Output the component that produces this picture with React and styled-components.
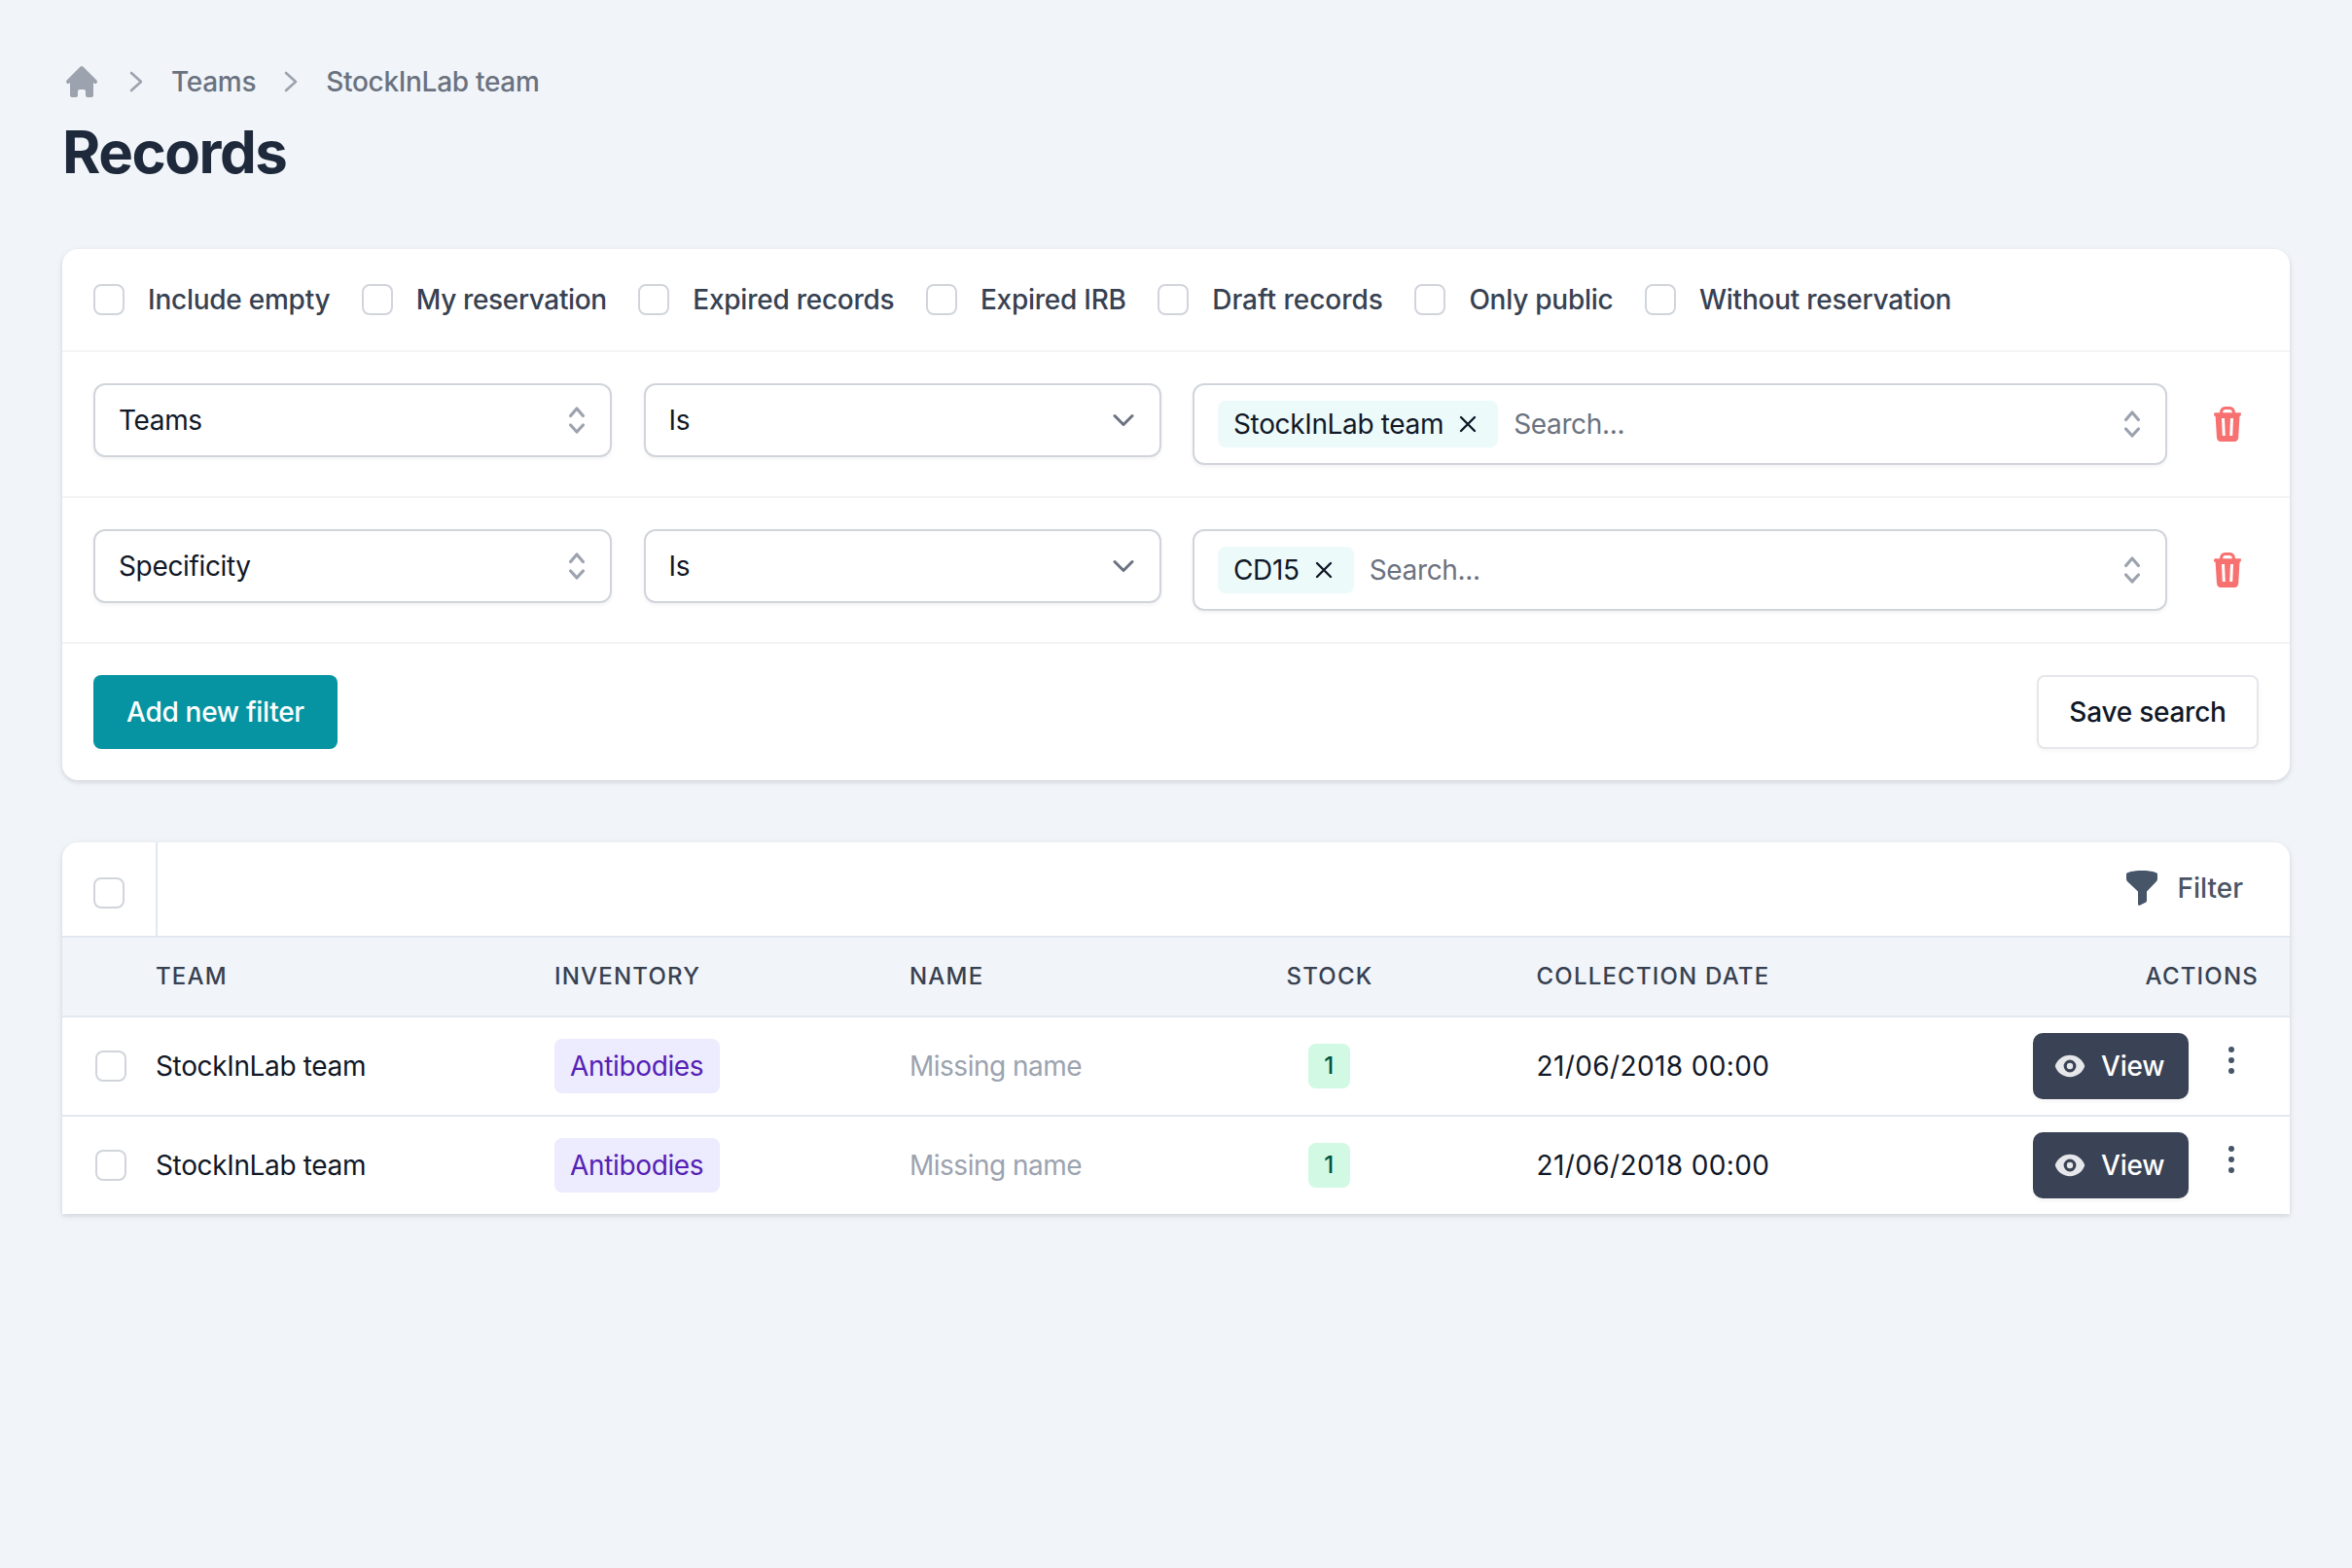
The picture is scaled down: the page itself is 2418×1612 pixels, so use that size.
import React from "react";
import styled, { createGlobalStyle } from "styled-components";

const Global = createGlobalStyle`
  * { box-sizing: border-box; }
  html, body { margin: 0; padding: 0; background: #f1f5f9; }
  body { font-family: Inter, "Noto Sans", sans-serif; font-size: 28px; line-height: 40px; letter-spacing: -0.35px; color: #111827; min-height: 1612px; }
`;

const Page = styled.main`
  padding: 64px 64px 0;
`;
const Breadcrumb = styled.nav`
  display: flex;
  align-items: center;
  height: 40px;
  gap: 16px;
  color: #6b7280;
  font-weight: 500;
  letter-spacing: -0.3px;
`;
const Title = styled.h1`
  margin: 16px 0 64px;
  font-size: 60px;
  line-height: 72px;
  font-weight: 700;
  letter-spacing: -1.5px;
  color: #1e293b;
`;
const Card = styled.section`
  background: #fff;
  border-radius: ${(p) => (p.$flat ? "16px 16px 0 0" : "16px")};
  box-shadow: 0 2px 6px rgba(15, 23, 42, 0.1), 0 2px 4px rgba(15, 23, 42, 0.05);
  margin-bottom: ${(p) => p.$gap || 0}px;
`;
const OptionRow = styled.div`
  display: flex;
  align-items: center;
  gap: 32.5px;
  padding: 32px;
  border-bottom: 2px solid #f3f4f6;
`;
const Option = styled.label`
  display: flex;
  align-items: center;
  gap: 24px;
  color: #374151;
  font-weight: 500;
  letter-spacing: ${(p) => p.$spacing};
`;
const Box = styled.span`
  display: block;
  flex: none;
  width: 32px;
  height: 32px;
  background: #fff;
  border: 2px solid #d1d5db;
  border-radius: 8px;
`;
const FilterRow = styled.div`
  display: grid;
  grid-template-columns: 533px 532px 1002px 1fr;
  column-gap: 32.5px;
  align-items: start;
  padding: 32px;
  border-bottom: 2px solid #f3f4f6;
`;
const Select = styled.div`
  display: flex;
  align-items: center;
  justify-content: space-between;
  height: 76px;
  padding: 0 26px 0 24px;
  background: #fff;
  border: 2px solid #d1d5db;
  border-radius: 12px;
  box-shadow: 0 2px 4px rgba(0, 0, 0, 0.05);
`;
const Multi = styled.div`
  display: flex;
  align-items: center;
  height: 84px;
  padding: 0 26px 0 24px;
  gap: 16px;
  background: #fff;
  border: 2px solid #d1d5db;
  border-radius: 12px;
  box-shadow: 0 2px 4px rgba(0, 0, 0, 0.05);
`;
const Tag = styled.span`
  display: flex;
  align-items: center;
  gap: 16px;
  height: 48px;
  padding: 0 22px 0 16px;
  background: #edfafa;
  border-radius: 8px;
  color: #111827;
`;
const Placeholder = styled.span`
  flex: 1;
  color: #6b7280;
`;
const TrashCell = styled.div`
  display: flex;
  justify-content: flex-end;
  padding: 24px 18px 0 0;
`;
const Footer = styled.div`
  display: flex;
  justify-content: space-between;
  padding: 32px;
`;
const Primary = styled.button`
  height: 76px;
  width: 251px;
  padding: 0;
  border: 0;
  border-radius: 8px;
  background: #0694a2;
  color: #fff;
  font: 500 28px/40px Inter, sans-serif;
  letter-spacing: -0.3px;
`;
const Secondary = styled.button`
  height: 76px;
  width: 228px;
  padding: 0;
  background: #fff;
  border: 2px solid #e5e7eb;
  border-radius: 8px;
  color: #111827;
  font: 500 28px/40px Inter, sans-serif;
  letter-spacing: -0.25px;
  box-shadow: 0 2px 4px rgba(0, 0, 0, 0.04);
`;
const TopBar = styled.div`
  display: flex;
  height: 98px;
  border-bottom: 2px solid #e2e8f0;
`;
const SelectAll = styled.div`
  width: 98px;
  padding: 36px 0 0 32px;
  border-right: 2px solid #e2e8f0;
`;
const FilterToggle = styled.div`
  margin-left: auto;
  display: flex;
  align-items: center;
  gap: 20px;
  padding: 0 48px 2px 0;
  color: #4b5563;
  font-weight: 500;
  letter-spacing: 0;
`;
const Row = styled.div`
  display: grid;
  grid-template-columns: 96px 410px 365px 387.5px 86px 615.5px 330px;
  align-items: center;
  height: ${(p) => (p.$head ? 82 : p.$last ? 100 : 102)}px;
  background: ${(p) => (p.$head ? "#f1f5f9" : "transparent")};
  border-bottom: ${(p) => (p.$last ? "0" : "2px solid #e2e8f0")};
`;
const HeadCell = styled.div`
  font-size: 24px;
  line-height: 32px;
  font-weight: 450;
  letter-spacing: 0.05em;
  text-transform: uppercase;
  color: #374151;
  white-space: nowrap;
  padding-left: ${(p) => p.$pl || 0}px;
  padding-right: ${(p) => p.$pr || 0}px;
  text-align: ${(p) => p.$align || "left"};
`;
const Cell = styled.div`
  display: flex;
  align-items: center;
  color: ${(p) => p.$color || "#111827"};
  padding-left: ${(p) => p.$pl || 0}px;
  justify-content: ${(p) => p.$justify || "flex-start"};
  letter-spacing: ${(p) => p.$spacing || "inherit"};
`;
const Inventory = styled.span`
  display: inline-flex;
  align-items: center;
  height: 56px;
  padding: 0 17px 0 16px;
  background: #edebfe;
  color: #5521b5;
  border-radius: 8px;
`;
const Stock = styled.span`
  display: inline-flex;
  align-items: center;
  justify-content: center;
  width: 43px;
  height: 46px;
  background: #d1f9e4;
  color: #03543f;
  border-radius: 8px;
  font-size: 24px;
  font-weight: 500;
`;
const Actions = styled.div`
  display: flex;
  align-items: center;
  justify-content: flex-end;
  gap: 41px;
  padding-right: 57px;
`;
const ViewButton = styled.button`
  display: flex;
  align-items: center;
  gap: 16px;
  width: 160px;
  height: 68px;
  padding: 0 0 0 22px;
  border: 0;
  border-radius: 10px;
  background: #3a4255;
  color: #fff;
  font: 500 28px/40px Inter, sans-serif;
  letter-spacing: -0.2px;
  box-shadow: 0 2px 4px rgba(0, 0, 0, 0.06);
`;
const Dots = styled.svg`
  display: block;
  margin-top: -12px;
`;

const Home = () => (
  <svg width="40" height="40" viewBox="0 0 20 20" fill="#9ca3af">
    <path d="M10.707 2.293a1 1 0 00-1.414 0l-7 7a1 1 0 001.414 1.414L4 10.414V17a1 1 0 001 1h2a1 1 0 001-1v-2a1 1 0 011-1h2a1 1 0 011 1v2a1 1 0 001 1h2a1 1 0 001-1v-6.586l.293.293a1 1 0 001.414-1.414l-7-7z" />
  </svg>
);
const ChevronRight = () => (
  <svg width="40" height="40" viewBox="0 0 40 40" fill="none" stroke="#9ca3af" strokeWidth="2.6" strokeLinecap="round" strokeLinejoin="round">
    <path d="M15 11l10 9-10 9" />
  </svg>
);
const UpDown = () => (
  <svg width="16" height="28" viewBox="0 0 16 28" fill="none" stroke="#9ca3af" strokeWidth="3.2" strokeLinecap="round" strokeLinejoin="round">
    <path d="M1.600 9.500L8 2l6.400 7.500M1.600 19L8 26l6.400-7" />
  </svg>
);
const ChevronDown = () => (
  <svg width="22" height="14" viewBox="0 0 22 14" fill="none" stroke="#6b7280" strokeWidth="3" strokeLinecap="round" strokeLinejoin="round">
    <path d="M2 2.500l9 9 9-9" />
  </svg>
);
const Close = () => (
  <svg width="18" height="18" viewBox="0 0 18 18" fill="none" stroke="#111827" strokeWidth="2.4" strokeLinecap="round">
    <path d="M2 2l14 14M16 2L2 16" />
  </svg>
);
const Trash = () => (
  <svg width="28" height="36" viewBox="0 0 28 36" fill="#f87171">
    <path fillRule="evenodd" d="M6 6.200C6 2.800 8.400 0 11.500 0h5C19.600 0 22 2.800 22 6.200h4.800c.7 0 1.200.6 1.200 1.200S27.500 9.800 26.800 9.800h-.3l-1.300 22.200c-.1 2.300-1.800 4-4 4H7c-2.200 0-3.900-1.700-4-4L1.600 9.800h-.4C.5 9.800 0 9.100 0 8.400s.5-2.200 1.200-2.200H6zm3.100 0h9.800C18.900 4.400 17.800 3 16.200 3h-4.400C10.200 3 9.100 4.400 9.100 6.200zM8 12l.8 18h3l-.8-18H8zm9 0l-.8 18h3l.8-18h-3z" />
  </svg>
);
const Funnel = () => (
  <svg width="32" height="36" viewBox="0 0 32 36" fill="#475569">
    <path d="M0 3.500C0 1.800 7 0 16 0s16 1.800 16 3.500v5c0 1-.4 2-1.100 2.700L21 21.500V31c0 .8-.5 1.400-1.200 1.800l-6 3c-.9.4-1.800-.2-1.800-1.200V21.500L1.100 11.200C.4 10.500 0 9.500 0 8.500v-5z" />
  </svg>
);
const Eye = () => (
  <svg width="32" height="32" viewBox="0 0 20 20" fill="#e5e7eb">
    <path d="M10 12a2 2 0 100-4 2 2 0 000 4z" />
    <path fillRule="evenodd" d="M.458 10C1.732 5.943 5.522 3 10 3s8.268 2.943 9.542 7c-1.274 4.057-5.064 7-9.542 7S1.732 14.057.458 10zM14 10a4 4 0 11-8 0 4 4 0 018 0z" />
  </svg>
);

const options = [
  { label: "Include empty", spacing: "-0.25px" },
  { label: "My reservation", spacing: "-0.36px" },
  { label: "Expired records", spacing: "-0.25px" },
  { label: "Expired IRB", spacing: "-0.25px" },
  { label: "Draft records", spacing: "-0.02px" },
  { label: "Only public", spacing: "-0.25px" },
  { label: "Without reservation", spacing: "-0.25px" },
];
const filters = [
  { field: "Teams", tag: "StockInLab team" },
  { field: "Specificity", tag: "CD15" },
];

export default function App() {
  return (
    <Page>
      <Global />
      <Breadcrumb>
        <Home />
        <ChevronRight />
        <span>Teams</span>
        <ChevronRight />
        <span>StockInLab team</span>
      </Breadcrumb>
      <Title>Records</Title>

      <Card $gap={64}>
        <OptionRow>
          {options.map((o) => (
            <Option key={o.label} $spacing={o.spacing}>
              <Box />
              {o.label}
            </Option>
          ))}
        </OptionRow>
        {filters.map((f) => (
          <FilterRow key={f.field}>
            <Select>
              {f.field}
              <UpDown />
            </Select>
            <Select>
              Is
              <ChevronDown />
            </Select>
            <Multi>
              <Tag>
                {f.tag}
                <Close />
              </Tag>
              <Placeholder>Search...</Placeholder>
              <UpDown />
            </Multi>
            <TrashCell>
              <Trash />
            </TrashCell>
          </FilterRow>
        ))}
        <Footer>
          <Primary>Add new filter</Primary>
          <Secondary>Save search</Secondary>
        </Footer>
      </Card>

      <Card $flat>
        <TopBar>
          <SelectAll>
            <Box />
          </SelectAll>
          <FilterToggle>
            <Funnel />
            Filter
          </FilterToggle>
        </TopBar>
        <Row $head>
          <span />
          <HeadCell>Team</HeadCell>
          <HeadCell>Inventory</HeadCell>
          <HeadCell>Name</HeadCell>
          <HeadCell>Stock</HeadCell>
          <HeadCell $pl={171}>Collection date</HeadCell>
          <HeadCell $align="right" $pr={32}>Actions</HeadCell>
        </Row>
        {[0, 1].map((i) => (
          <Row key={i} $last={i === 1}>
            <Cell $pl={34}>
              <Box />
            </Cell>
            <Cell>StockInLab team</Cell>
            <Cell>
              <Inventory>Antibodies</Inventory>
            </Cell>
            <Cell $color="#9ca3af" $spacing="-0.5px">Missing name</Cell>
            <Cell $justify="center" $pl={1}>
              <Stock>1</Stock>
            </Cell>
            <Cell $pl={171} $spacing="0.38px">21/06/2018 00:00</Cell>
            <Actions>
              <ViewButton>
                <Eye />
                View
              </ViewButton>
              <Dots width="6" height="28" viewBox="0 0 6 28" fill="#475569">
                <circle cx="3" cy="3" r="3" />
                <circle cx="3" cy="14" r="3" />
                <circle cx="3" cy="25" r="3" />
              </Dots>
            </Actions>
          </Row>
        ))}
      </Card>
    </Page>
  );
}
